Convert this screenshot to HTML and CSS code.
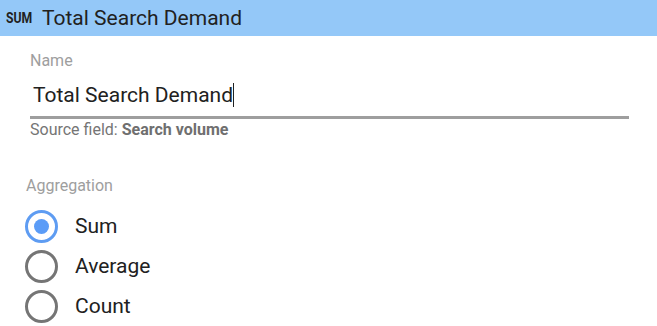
FILE: index.html
```html
<!DOCTYPE html>
<html lang="en">
<head>
    <meta charset="UTF-8">
    <title>Total Search Demand</title>
    <link rel="stylesheet" href="styles.css">
</head>
<body>
    <!-- Header -->
    <div class="header">
        <span class="agg-tag">SUM</span>
        <span class="header-title">Total Search Demand</span>
    </div>

    <div class="panel">
        <!-- Name field -->
        <div class="field">
            <div class="label">Name</div>
            <div class="input-wrap">
                <span class="input-text">Total Search Demand</span><span class="caret"></span>
            </div>
            <div class="hint">Source field: <b>Search volume</b></div>
        </div>

        <!-- Aggregation -->
        <div class="field agg">
            <div class="label">Aggregation</div>
            <div class="radio-list">
                <div class="radio-row">
                    <span class="radio checked"></span>
                    <span class="radio-label">Sum</span>
                </div>
                <div class="radio-row">
                    <span class="radio"></span>
                    <span class="radio-label">Average</span>
                </div>
                <div class="radio-row">
                    <span class="radio"></span>
                    <span class="radio-label">Count</span>
                </div>
            </div>
        </div>
    </div>
</body>
</html>
```

FILE: styles.css
```css
body {
    margin: 0;
    font-family: Roboto, "Liberation Sans", sans-serif;
    background: #fff;
    color: #212121;
    overflow: hidden;
}

.header {
    height: 36px;
    background-color: #94c8f8;
    display: flex;
    align-items: center;
    padding-left: 6px;
}

.agg-tag {
    display: inline-block;
    font-size: 14px;
    font-weight: bold;
    color: #212121;
    width: 36px;
    transform: scaleX(0.87);
    transform-origin: left center;
}

.header-title {
    font-size: 21px;
    color: #212121;
}

.panel {
    padding: 16px 28px 0 25px;
}

.name-field {
    margin-left: 5px;
}

.label {
    font-size: 16px;
    color: #9e9e9e;
    line-height: 18px;
}

.field .label {
    padding-left: 5px;
}

.agg .label {
    padding-left: 1px;
}

.input-wrap {
    width: 599px;
    margin-left: 5px;
    border-bottom: 3px solid #9e9e9e;
    height: 44px;
    display: flex;
    align-items: center;
    padding-left: 3px;
    padding-bottom: 2px;
    box-sizing: border-box;
    margin-top: 5px;
}

.input-text {
    font-size: 21px;
    color: #212121;
}

.caret {
    display: inline-block;
    width: 1px;
    height: 24px;
    background: #212121;
}

.hint {
    font-size: 16px;
    line-height: 19px;
    color: #757575;
    margin-top: 1px;
    padding-left: 5px;
}

.hint b {
    color: #6f6f6f;
}

.agg {
    margin-top: 38px;
}

.radio-list {
    margin-top: 11px;
}

.radio-row {
    display: flex;
    align-items: center;
    height: 40px;
}

.radio {
    width: 33px;
    height: 33px;
    box-sizing: border-box;
    border: 3px solid #757575;
    border-radius: 50%;
    display: flex;
    align-items: center;
    justify-content: center;
}

.radio.checked {
    border-color: #5e9cf2;
}

.radio.checked::after {
    content: "";
    width: 15px;
    height: 15px;
    border-radius: 50%;
    background: #5b9cf7;
}

.radio-label {
    font-size: 21px;
    margin-left: 17px;
    color: #212121;
}
```
